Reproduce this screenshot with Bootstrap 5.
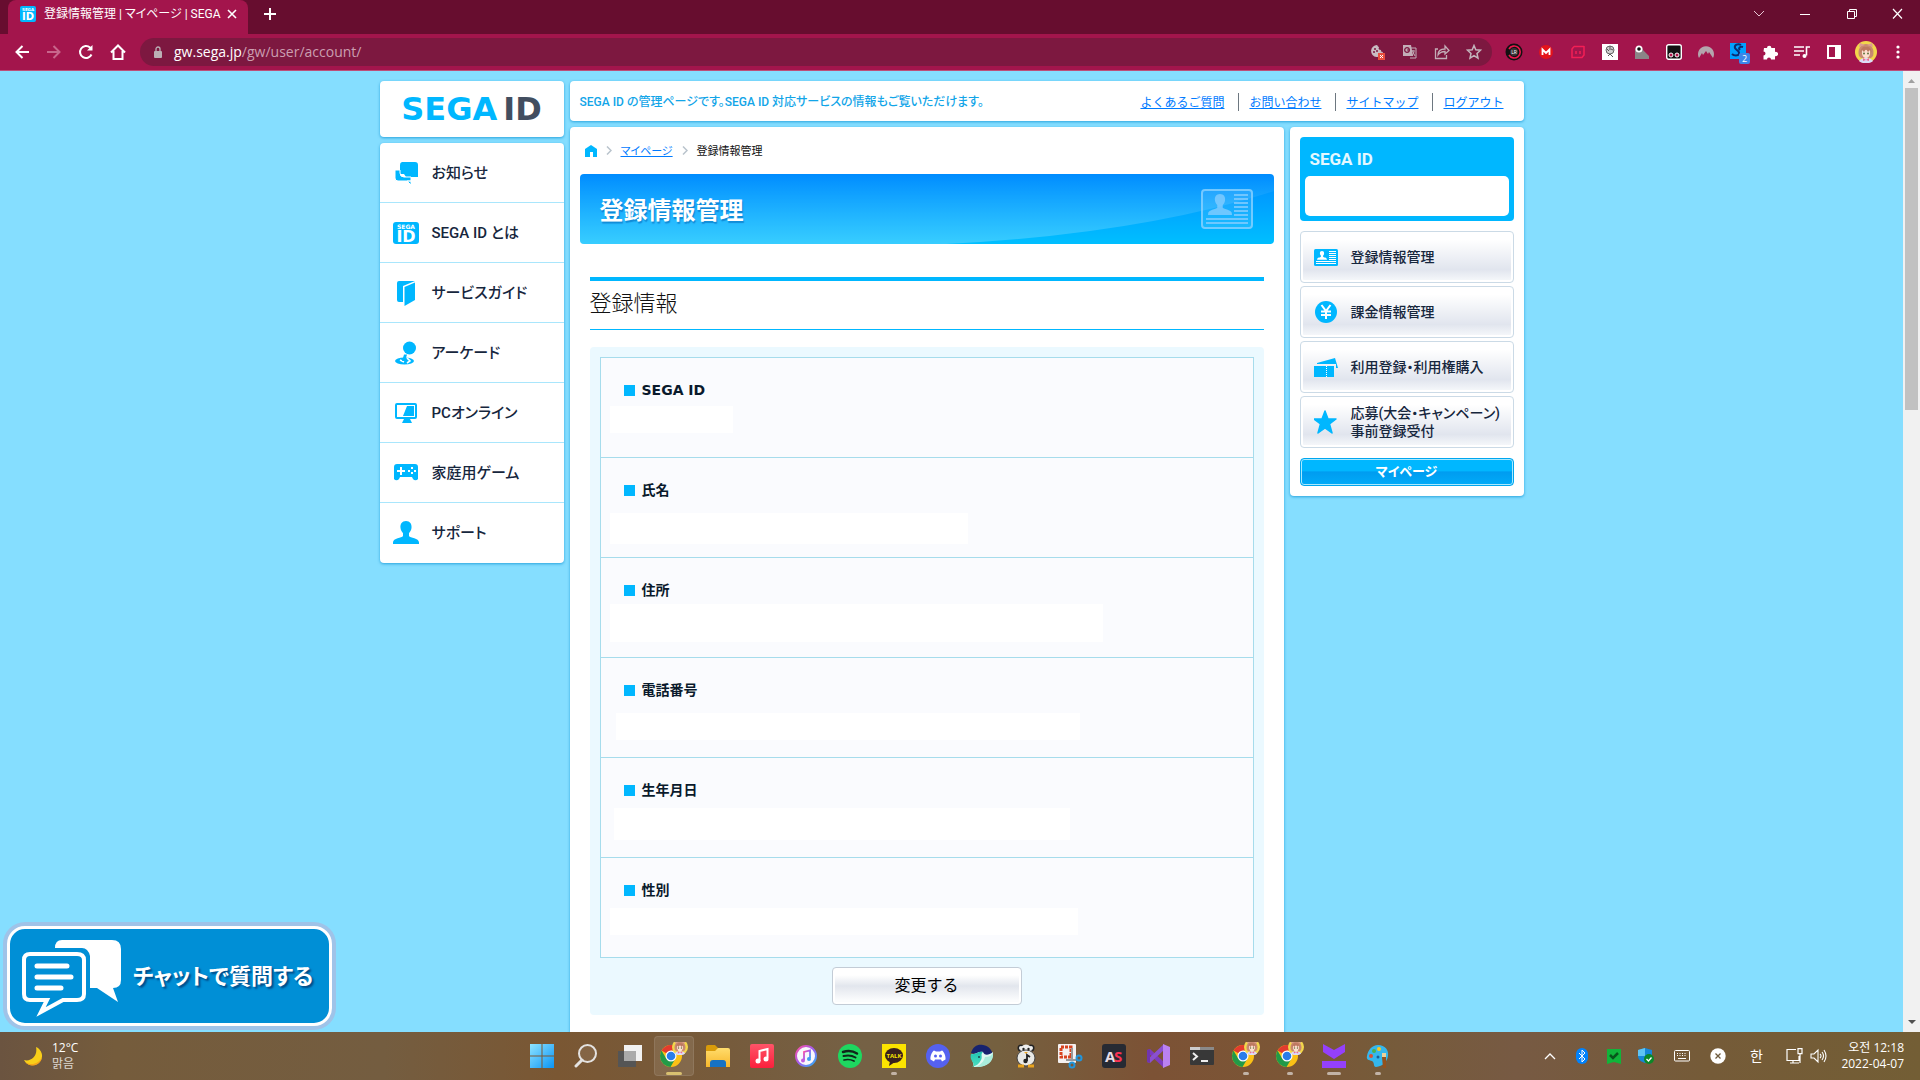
<!DOCTYPE html>
<html lang="ja">
<head>
<meta charset="utf-8">
<meta name="viewport" content="width=device-width, initial-scale=1">
<title>登録情報管理 | マイページ | SEGA ID</title>
<link href="https://cdn.jsdelivr.net/npm/bootstrap@5.3.0/dist/css/bootstrap.min.css" rel="stylesheet">
<style>
:root{--sky:#00b7ff;--ink:#16263d}
body{height:100vh;overflow:hidden;font-family:Roboto,"Noto Sans CJK JP",sans-serif;color:#111;background:#85deff;line-height:1.2}
svg{display:block;flex:none}
button{border:0;background:none;padding:0;color:inherit}
.palt{font-feature-settings:"palt"}
/* browser frame */
.ui{font-family:"Open Sans","Noto Sans CJK JP","Noto Sans CJK KR",sans-serif}
.tabstrip{height:34px;background:#670d2f;color:#fff;padding-left:8px}
.tab{width:240px;background:#a3154c;border-radius:8px 8px 0 0;font-size:12px;padding:0 11px 6px 12px;gap:8px}
.tab-title{font-family:Roboto,"Noto Sans CJK JP",sans-serif;flex:1 1 0;min-width:0}
.newtab{width:44px;padding-bottom:6px}
.winbtn{width:46px;height:24px}
.toolbar{height:37px;background:#a3154c;border-bottom:1px solid #bd4f79;color:#fff;padding:0 6px}
.tool{width:32px;height:28px;display:flex;align-items:center;justify-content:center;flex:none}
.address{height:28px;border-radius:14px;background:#7d1840;margin:0 6px;padding:0 2px}
.url{font-size:14px;text-decoration:none;color:#cb9fb0}
.url b{color:#fff;font-weight:400}
.scroller{width:17px;background:#f1f1f1;padding:7px 2px}
.thumb{height:34%;width:13px;background:#c1c1c1;margin-top:5px}
/* page */
.site{max-width:1144px;margin:0 auto;padding-top:10px;gap:6px}
.stack,.site-cols{gap:6px}
.panel{background:#fff;border-radius:4px;box-shadow:0 1px 3px #0089cfb0}
.side{width:184px;gap:6px}
.aside-col{width:234px}
.logo{height:56px;font:700 32px/56px "DejaVu Sans",sans-serif;color:var(--sky);text-decoration:none;gap:6px}
.logo span+span{color:#424e60}
.menu a{height:60px;padding:0 13px;gap:13px;color:var(--ink);font-size:15px;font-weight:500;text-decoration:none;border-bottom:1px solid #a9e6fc}
.menu a:last-child{border-bottom:0}
.menu svg,.acct svg{fill:var(--sky)}
.topbar{height:40px;padding:2px 20px 0 10px;font-size:12px}
.topbar p{color:#12a5e8;font-weight:500}
.topbar a,.crumbs a{color:#007bff}
.topbar li{font-family:"Noto Sans CJK JP",sans-serif;line-height:18px}
.topbar li+li{border-left:1px solid #6d7780;margin-left:14px;padding-left:10px}
.crumbs{font-size:11px;height:47px;padding:0 4px 0 5px;gap:9px;font-family:"Noto Sans CJK JP",sans-serif}
.main-col{padding:0 10px 60px}
.banner{height:70px;border-radius:4px;overflow:hidden;position:relative;background:linear-gradient(#008cff,#00bfff);padding:0 21px 0 20px}
.banner h1{font-size:24px;font-weight:700;color:#fff;text-shadow:1px 2px 1px #0067b890;position:relative;padding-top:4px}
.swoosh{position:absolute;inset:0;width:100%;height:100%}
.banner .idcard{position:relative}
.section-title{font:300 22px/40px "Noto Sans CJK JP",sans-serif;height:53px;border-top:4px solid var(--sky);border-bottom:1px solid var(--sky);margin:33px 10px 17px}
.sheet{background:#ebf9ff;border-radius:4px;margin:0 10px;padding:10px}
.fields{border:1px solid #a6dcec;background:#fafbfe}
.fields>div{height:100px;padding:0 9px}
.fields>div+div{border-top:1px solid #a6dcec}
.fields>div:first-child{height:99px}
.fields dt{font:700 14px/20px "DejaVu Sans","Noto Sans CJK JP",sans-serif;padding:22px 0 0 14px;gap:7px;color:#0a1a2c}
.fields dt::before{content:"";width:11px;height:11px;background:var(--sky)}
.fields dd{background:#fff;height:27px;margin:8px 0 0}
.w-id{width:123px}.w-name{width:358px}.w-addr{width:493px}.w-tel{width:464px}.w-birth{width:456px}.w-sex{width:468px}
.fields .w-id{margin-top:6px}
.fields .w-name,.fields .w-tel{margin-top:13px}
.fields .w-name{height:31px}
.fields .w-addr{margin-top:4px;height:38px}
.fields .w-tel{margin-left:6px}
.fields .w-birth{height:32px;margin-left:4px}
.change{width:190px;height:38px;border:1px solid #c3ccd6;border-radius:4px;background:linear-gradient(#fff 20%,#e2e6ed 50%,#fbfcfd 90%);box-shadow:inset 0 0 0 2px #fff;font:400 16px/20px "Noto Sans CJK JP",sans-serif;color:#000;margin:9px auto 0;padding-bottom:4px}
.acct{padding:10px}
.whoami{background:var(--sky);border-radius:4px;padding:12px 5px 5px;font-size:17px;line-height:20px;font-weight:700;margin-bottom:10px}
.whoami label{padding-left:5px;color:#e5f8ff}
.whoami input{display:block;width:100%;height:40px;border:0;border-radius:5px;background:#fff;margin-top:7px}
.acct-link{height:52px;border:1px solid #cbdae6;border-radius:4px;margin-bottom:3px;padding:0 2px 0 13px;gap:13px;background:linear-gradient(#fff 15%,#e1e5ee 75%,#f8fafc 100%);box-shadow:inset 0 0 0 2px #fff;color:var(--ink);text-decoration:none;font-size:14px;line-height:18px;font-weight:500;white-space:nowrap}
.mypage{height:28px;margin-top:10px;border:1px solid #00a6ee;border-radius:4px;box-shadow:inset 0 0 0 1px #a9e9ff;background:linear-gradient(#00b7ff 45%,#009cf0 50%,#00abf8);color:#fff;font-size:13px;font-weight:700;text-decoration:none}
.chat{position:absolute;left:7px;bottom:6px;width:325px;height:100px;background:#008fd6;border:3px solid #fff;border-radius:18px;box-shadow:0 0 0 4px #9fc3e8;color:#fff;font-size:22px;font-weight:700;padding:3px 11px 0;gap:10px;text-shadow:2px 2px 2px #004a86;white-space:nowrap}
/* taskbar */
.taskbar{height:48px;color:#fff;font-size:12px;line-height:16px;background:linear-gradient(90deg,#6b5440,#755c3c 6%,#745d40 20%,#7a5733 29%,#765b3c 38%,#756145 45%,#75603f 52%,#7c5235 60%,#7b5636 67%,#765b3a 72%,#775a43 79%,#755b38 89%,#735e35)}
.edge{flex:1 1 0;min-width:0}
.app{width:44px;height:48px;position:relative;display:flex;align-items:center;justify-content:center}
.app.active::before{content:"";position:absolute;inset:4px 2px;background:#ffffff18;border:1px solid #ffffff18;border-radius:4px}
.app.open::after,.app.active::after{content:"";position:absolute;bottom:5px;width:6px;height:3px;border-radius:2px;background:#c2b3a6}
.app.active::after{width:16px;background:#d8c070}
.app.wide::after{width:14px}
.app svg{position:relative}
.tray{width:32px;display:flex;justify-content:center;flex:none}
.han{font-size:14px;margin:0 6px}
.clock{padding:0 16px 0 14px}
</style>
<script src="https://cdn.jsdelivr.net/npm/bootstrap@5.3.0/dist/js/bootstrap.bundle.min.js"></script>
</head>
<body class="d-flex flex-column">
<svg width="0" height="0" class="position-absolute" aria-hidden="true">
<defs>
<linearGradient id="gwin" x2="1" y2="1"><stop stop-color="#8fe4ff"/><stop offset="1" stop-color="#0a94f5"/></linearGradient>
<linearGradient id="gsw" x2="0" y2="1"><stop stop-color="#fff" stop-opacity="0"/><stop offset="1" stop-color="#fff" stop-opacity=".22"/></linearGradient>
<linearGradient id="gred" x2="0" y2="1"><stop stop-color="#ff5468"/><stop offset="1" stop-color="#fb203c"/></linearGradient>
<linearGradient id="gfold" x2="0" y2="1"><stop stop-color="#ffdc6c"/><stop offset="1" stop-color="#f7b72b"/></linearGradient>
<linearGradient id="gnote" x2="1" y2="1"><stop stop-color="#ff4fa0"/><stop offset=".5" stop-color="#a05cf0"/><stop offset="1" stop-color="#25b6f5"/></linearGradient>
<linearGradient id="gwhale" x2="0" y2="1"><stop stop-color="#1fc3b2"/><stop offset="1" stop-color="#4fe0c0"/></linearGradient>
<symbol id="face" viewBox="0 0 22 22"><circle cx="11" cy="11" r="11" fill="#f2d64b"/><path d="M4 15C2 8 6 3 11 3s9 5 7 12l-2 2H6z" fill="#c98a70"/><path d="M4 6l1-4 5 2zM18 6l-1-4-5 2z" fill="#dd9c90"/><path d="M7 9h8v4q-1 4-4 4t-4-4z" fill="#fde0cf"/><path d="M5 12c1-6 4-7 6-6 3-1 5 1 6 6l-2-3-2 2-2-3-2 3-2-2z" fill="#bd7860"/><circle cx="9" cy="12.500" r="1" fill="#63733e"/><circle cx="13" cy="12.500" r="1" fill="#63733e"/><path d="M4 20c2-4 12-4 14 0-3 3-11 3-14 0z" fill="#dcdcf8"/><path d="M8 17l3 2 3-2v3l-3-1-3 1z" fill="#ef6c95"/></symbol>
<symbol id="chrome" viewBox="0 0 28 28"><circle cx="11" cy="17" r="11" fill="#fbc116"/><path d="M11 17L1.500 11.500A11 11 0 0 1 20.500 11.500H11z" fill="#e33b2e"/><path d="M1.500 11.500A11 11 0 0 0 10.500 28l5-8.500L6.200 19.500z" fill="#229a48"/><circle cx="11" cy="17" r="5.500" fill="#fff"/><circle cx="11" cy="17" r="4.300" fill="#2a7de9"/><use href="#face" x="12" y="0" width="16" height="16"/></symbol>
<symbol id="idbadge" viewBox="0 0 26 22"><rect width="26" height="22" rx="3" fill="#00b7ff"/><text x="13" y="6.500" text-anchor="middle" font-family="DejaVu Sans" font-weight="700" font-size="6" fill="#fff">SEGA</text><text x="13" y="19.500" text-anchor="middle" font-family="DejaVu Sans" font-weight="700" font-size="16" fill="#fff">ID</text></symbol>
<symbol id="person" viewBox="0 0 26 24"><path d="M13 0c4 0 6 3 5.500 7-.3 2.500-1.500 4-2.500 5v3c1 2 10 2 10 6.500V23H0v-1.500C0 17 9 17 10 15v-3c-1-1-2.200-2.500-2.500-5C7 3 9 0 13 0z"/></symbol>
</defs>
</svg>

<header class="ui flex-shrink-0">
<div class="tabstrip d-flex">
 <div class="tab d-flex align-items-center">
  <svg width="16" height="16" viewBox="0 0 16 16"><rect width="16" height="16" rx="2" fill="#00b7ff"/><text x="8" y="5" font-size="4" font-weight="700" text-anchor="middle" fill="#fff" font-family="DejaVu Sans">SEGA</text><text x="8" y="14" font-size="10" font-weight="700" text-anchor="middle" fill="#fff" font-family="DejaVu Sans">ID</text></svg>
  <span class="tab-title palt text-nowrap">登録情報管理 | マイページ | SEGA</span>
  <button aria-label="Close tab"><svg width="10" height="10" stroke="#fff" stroke-width="1.600"><path d="M1 1l8 8M9 1L1 9"/></svg></button>
 </div>
 <button class="newtab d-flex align-items-center justify-content-center" aria-label="New tab"><svg width="12" height="12" stroke="#fff" stroke-width="2"><path d="M6 0v12M0 6h12"/></svg></button>
 <div class="d-flex ms-auto">
  <button class="winbtn d-flex align-items-end justify-content-center pb-1" aria-label="Search tabs"><svg width="12" height="12" fill="none" stroke="#e7c6d3"><path d="M1 3l5 5 5-5"/></svg></button>
  <button class="winbtn d-flex align-items-end justify-content-center pb-1" aria-label="Minimize"><svg width="10" height="12" fill="none" stroke="#fff"><path d="M0 6.500h10"/></svg></button>
  <button class="winbtn d-flex align-items-end justify-content-center pb-1" aria-label="Restore"><svg width="11" height="12" fill="none" stroke="#fff"><path d="M1.500 3.500h7v7h-7zM3.500 3V1.500h7v7H9"/></svg></button>
  <button class="winbtn d-flex align-items-end justify-content-center pb-1" aria-label="Close"><svg width="11" height="12" fill="none" stroke="#fff" stroke-width="1.200"><path d="M1 1l9 9.500M10 1L1 10.500"/></svg></button>
 </div>
</div>
<div class="toolbar d-flex align-items-center">
 <button class="tool" aria-label="Back"><svg width="14" height="14" fill="none" stroke="#fff" stroke-width="2"><path d="M14 7H2M7.500 1L1.500 7l6 6"/></svg></button>
 <button class="tool" aria-label="Forward"><svg width="14" height="14" fill="none" stroke="#c8668c" stroke-width="2"><path d="M0 7h12M6.500 1l6 6-6 6"/></svg></button>
 <button class="tool" aria-label="Reload"><svg width="16" height="16" fill="none" stroke="#fff" stroke-width="2"><path d="M13.500 10.500A6 6 0 1 1 12 3.500l1.500 1.500"/><path d="M14.500 1v5.500H9z" fill="#fff" stroke="none"/></svg></button>
 <button class="tool" aria-label="Home"><svg width="16" height="16" fill="none" stroke="#fff" stroke-width="2"><path d="M1 8.500L8 1.500l7 7M3.500 7v8h9V7"/></svg></button>
 <div class="address d-flex align-items-center flex-fill">
  <span class="tool"><svg width="8" height="12" fill="#bbb0b5"><path d="M1 5h6a1 1 0 0 1 1 1v5a1 1 0 0 1-1 1H1a1 1 0 0 1-1-1V6a1 1 0 0 1 1-1z"/><path d="M2 5.500V3a2 2 0 0 1 4 0v2.500" fill="none" stroke="#bbb0b5" stroke-width="1.300"/></svg></span>
  <a class="url" href="#"><b>gw.sega.jp</b>/gw/user/account/</a>
  <span class="ms-auto"></span>
  <button class="tool" aria-label="Cookies"><svg width="16" height="16"><path d="M7 1a6 6 0 1 0 6 7c-2 0-2-1-2-2-2 0-3-1-2-3-1 0-1-1-2-2z" fill="#c9bcc2"/><circle cx="5" cy="5" r="1" fill="#7d1840"/><circle cx="4" cy="8" r="1" fill="#7d1840"/><circle cx="7" cy="7" r="1" fill="#7d1840"/><rect x="8" y="9" width="7" height="7" fill="#e84d3d"/><path d="M10 11l3 3m0-3l-3 3" stroke="#fff"/></svg></button>
  <button class="tool" aria-label="Translate"><svg width="16" height="16"><path d="M7 4h7v10H8" fill="none" stroke="#c3adb7"/><path d="M1 1h8l2 11H1z" fill="#c3adb7"/><circle cx="5" cy="6" r="2.300" fill="none" stroke="#7d1840" stroke-width="1.300"/><path d="M5 6h3" stroke="#7d1840"/><path d="M9 7h4M11 6v2l2 4M12 8l-2 4" stroke="#c3adb7"/></svg></button>
  <button class="tool" aria-label="Share"><svg width="16" height="16" fill="none" stroke="#c3adb7" stroke-width="1.300"><path d="M4 5H1.500v9.500h11V11M4 11c0-4 3-6 7-6V2l4 4.500L11 10V7.500C8 7.500 6 8 4 11z"/></svg></button>
  <button class="tool" aria-label="Bookmark"><svg width="16" height="16" fill="none" stroke="#c3b4bb" stroke-width="1.500"><path d="M8 1.500l1.800 4.300 4.700.4-3.500 3.200 1 4.800L8 11.700l-4 2.500 1-4.800L1.500 6.200l4.700-.4z"/></svg></button>
 </div>
 <button class="tool" aria-label="LR"><svg width="18" height="18"><circle cx="9" cy="9" r="8.500" fill="#111"/><path d="M4 6a6 6 0 1 1 0 6" fill="none" stroke="#ef174e" stroke-width="1.600"/><circle cx="9" cy="9" r="4" fill="#3b3438"/><text x="9" y="11" text-anchor="middle" font-size="5" fill="#fff">LR</text></svg></button>
 <button class="tool" aria-label="Mega"><svg width="14" height="14"><circle cx="7" cy="7" r="7" fill="#e4141b"/><path d="M3.500 10V4.500L7 8l3.500-3.500V10" stroke="#fff" stroke-width="1.800" fill="none"/></svg></button>
 <button class="tool" aria-label="Capture"><svg width="14" height="14" fill="none" stroke="#f31f55" stroke-width="1.500"><path d="M3 1.500h10M13 1v9l-2 2.500H1V4l2-2.500M5 6v3M9 6v3"/></svg></button>
 <button class="tool" aria-label="Sketch"><svg width="16" height="16"><path fill="#fff" d="M0 0h16v16H0z"/><circle cx="8" cy="6" r="4" fill="#cfcfcf" stroke="#666"/><path d="M5 5l2 2m2-2l2 1M6 12l2-2 3 3M8 2v4" stroke="#555" fill="none"/></svg></button>
 <button class="tool" aria-label="Stone"><svg width="16" height="16"><path d="M1 15V6C2 2 7 1 9 6l6 6v3z" fill="#8b8587"/><circle cx="5" cy="5" r="3.500" fill="#fff"/><circle cx="5" cy="5" r="1.800" fill="#111"/></svg></button>
 <button class="tool" aria-label="Scripts"><svg width="16" height="16"><rect x=".7" y=".7" width="14.600" height="14.600" rx="2" fill="#111" stroke="#fff" stroke-width="1.400"/><circle cx="5" cy="11" r="2" fill="#b4144a" stroke="#fff"/><circle cx="11" cy="11" r="2" fill="#b4144a" stroke="#fff"/></svg></button>
 <button class="tool" aria-label="Mountain"><svg width="16" height="14"><path d="M1 13A8 8 0 1 1 15 13l-4-6-1 2-2-3-3 4-1-2z" fill="#b4a5ad"/></svg></button>
 <button class="tool" aria-label="Shazam"><svg width="24" height="24"><path fill="#00a0ff" d="M4 3h16v16H4z"/><path d="M15 5c-3-2-7 0-6 3 1 2 5 3 4 6-1 2-5 2-7 0M17 7c-3-1-5 1-3 3" stroke="#0b2b70" stroke-width="2" fill="none"/><rect x="13" y="13" width="11" height="11" rx="2" fill="#3b86ea"/><text x="18.500" y="22" font-size="9" fill="#fff" text-anchor="middle">2</text></svg></button>
 <button class="tool" aria-label="Extensions"><svg width="16" height="16" fill="#fff"><path d="M2 4h3a2.200 2.200 0 1 1 4.400 0H13v4a2.200 2.200 0 1 1 0 4v3.500H9a2 2 0 0 0-4 0H1.500v-4a2 2 0 0 0 0-4z"/></svg></button>
 <button class="tool" aria-label="Media"><svg width="16" height="14" fill="none" stroke="#fff" stroke-width="1.600"><path d="M0 2h10M0 6h10M0 10h6M12.500 10.500V2H16"/><circle cx="10.500" cy="11" r="2" fill="#fff" stroke="none"/></svg></button>
 <button class="tool" aria-label="Side panel"><svg width="14" height="14"><path fill="#fff" fill-rule="evenodd" d="M0 0h14v14H0zM2 2v10h6V2z"/></svg></button>
 <button class="tool" aria-label="Profile"><svg width="22" height="22"><use href="#face"/></svg></button>
 <button class="tool" aria-label="Menu"><svg width="4" height="14" fill="#fff"><circle cx="2" cy="2" r="1.600"/><circle cx="2" cy="7" r="1.600"/><circle cx="2" cy="12" r="1.600"/></svg></button>
</div>
</header>

<div class="d-flex flex-fill overflow-hidden position-relative">
<div class="flex-fill">
<div class="site d-flex align-items-start">
 <div class="side d-flex flex-column flex-shrink-0">
  <a href="#" class="panel logo d-flex justify-content-center"><span>SEGA</span><span>ID</span></a>
  <nav class="panel menu palt">
   <a href="#" class="d-flex align-items-center"><svg width="26" height="24"><path d="M9 1h13a3 3 0 0 1 3 3v12H13l-2-3H7V4a3 3 0 0 1 2-3z"/><path d="M2 9v8a3 3 0 0 0 3 3h13v4l-4-4h4v-4h-7a4 4 0 0 1-4-4V9z" stroke="#fff" stroke-width="1"/></svg>お知らせ</a>
   <a href="#" class="d-flex align-items-center"><svg width="26" height="22"><use href="#idbadge"/></svg>SEGA ID とは</a>
   <a href="#" class="d-flex align-items-center"><svg width="26" height="26"><path d="M6 1h16L10 6v16H6a2 2 0 0 1-2-2V3a2 2 0 0 1 2-2z"/><path d="M11.500 7L22 2.500V20l-10.500 6z"/></svg>サービスガイド</a>
   <a href="#" class="d-flex align-items-center"><svg width="26" height="24"><circle cx="16.500" cy="7" r="6.500"/><ellipse cx="11.500" cy="20" rx="9.500" ry="3.500"/><path d="M7 19l4 2M14 17l3 3-3 2" stroke="#fff" stroke-width="1.600" fill="none"/><path d="M11 13.500h3L12 20H9z"/></svg>アーケード</a>
   <a href="#" class="d-flex align-items-center"><svg width="26" height="22"><path fill-rule="evenodd" d="M4 1h18a2 2 0 0 1 2 2v12a2 2 0 0 1-2 2h-5l2 4H9l2-4H4a2 2 0 0 1-2-2V3a2 2 0 0 1 2-2zM4 3v12h18V3z"/><path d="M14 4h7v10H10z"/></svg>PCオンライン</a>
   <a href="#" class="d-flex align-items-center"><svg width="26" height="20"><path d="M4 1h18a3 3 0 0 1 3 3v12a3 3 0 0 1-5 0l-1-2H7l-1 2a3 3 0 0 1-5 0V4a3 3 0 0 1 3-3z"/><path d="M8 4v8M4 8h8" stroke="#fff" stroke-width="2"/><path d="M18 4h2v2h-2zM18 9h2v2h-2zM15 7h2v2h-2zM21 7h2v2h-2z" fill="#fff"/></svg>家庭用ゲーム</a>
   <a href="#" class="d-flex align-items-center"><svg width="26" height="24"><use href="#person"/></svg>サポート</a>
  </nav>
 </div>
 <div class="stack flex-fill d-flex flex-column">
  <div class="panel topbar d-flex align-items-center justify-content-between">
   <p class="palt m-0">SEGA ID の管理ページです。SEGA ID 対応サービスの情報もご覧いただけます。</p>
   <ul class="list-unstyled d-flex m-0"><li><a href="#">よくあるご質問</a></li><li><a href="#">お問い合わせ</a></li><li><a href="#">サイトマップ</a></li><li><a href="#">ログアウト</a></li></ul>
  </div>
  <div class="d-flex align-items-start site-cols">
   <main class="panel main-col flex-fill">
    <nav class="crumbs palt d-flex align-items-center">
     <a href="#" aria-label="ホーム"><svg width="12" height="12" fill="#00b7ff"><path d="M6 0l6 4v8H8V7H5v5H0V4z"/></svg></a>
     <svg width="6" height="9" fill="none" stroke="#b9c3cc" stroke-width="1.500"><path d="M1 .5l4 4-4 4"/></svg>
     <a href="#">マイページ</a>
     <svg width="6" height="9" fill="none" stroke="#b9c3cc" stroke-width="1.500"><path d="M1 .5l4 4-4 4"/></svg>
     <span>登録情報管理</span>
    </nav>
    <div class="banner d-flex align-items-center justify-content-between">
     <svg class="swoosh" viewBox="0 0 694 70" preserveAspectRatio="none"><path d="M0 0h694v17Q560 60 366 70H0z" fill="url(#gsw)"/></svg>
     <h1 class="m-0">登録情報管理</h1>
     <svg class="idcard" width="52" height="40" fill="#8acfff" opacity=".8"><rect x="1" y="1" width="50" height="38" rx="3" fill="#fff" fill-opacity=".12" stroke="#8fd3ff" stroke-width="2"/><use href="#person" x="7" y="5" width="24" height="22"/><path d="M33 5h14v2H33zM33 9h14v2H33zM33 13h14v2H33zM33 17h14v2H33zM33 21h14v2H33zM33 25h14v2H33zM5 29h42v2H5zM5 33h42v2H5z"/></svg>
    </div>
    <h2 class="section-title">登録情報</h2>
    <section class="sheet">
     <dl class="fields m-0">
      <div><dt class="d-flex align-items-center">SEGA ID</dt><dd class="w-id"></dd></div>
      <div><dt class="d-flex align-items-center">氏名</dt><dd class="w-name"></dd></div>
      <div><dt class="d-flex align-items-center">住所</dt><dd class="w-addr"></dd></div>
      <div><dt class="d-flex align-items-center">電話番号</dt><dd class="w-tel"></dd></div>
      <div><dt class="d-flex align-items-center">生年月日</dt><dd class="w-birth"></dd></div>
      <div><dt class="d-flex align-items-center">性別</dt><dd class="w-sex"></dd></div>
     </dl>
     <button class="change d-block">変更する</button>
    </section>
   </main>
   <aside class="panel acct aside-col flex-shrink-0 palt">
    <div class="whoami"><label for="who">SEGA ID</label><input id="who" type="text"></div>
    <a href="#" class="acct-link d-flex align-items-center"><svg width="24" height="17"><rect width="24" height="17" rx="1.500"/><g fill="#fff"><use href="#person" x="3" y="2" width="10" height="9"/><path d="M15 2h7v1h-7zM15 4h7v1h-7zM15 6h7v1h-7zM15 8h7v1h-7zM15 10h7v1h-7zM2 12h20v1H2zM2 14h20v1H2z"/></g></svg>登録情報管理</a>
    <a href="#" class="acct-link d-flex align-items-center"><svg width="24" height="22"><circle cx="12" cy="11" r="11"/><path d="M7.500 4l4.500 6 4.500-6M12 10v8M7 10.500h10M7 14h10" stroke="#fff" stroke-width="2" fill="none"/></svg>課金情報管理</a>
    <a href="#" class="acct-link d-flex align-items-center"><svg width="24" height="20"><path d="M0 9h20v11H0z"/><path d="M3 6l18-5 3 10h-2V7H3z"/><path d="M12.500 9v11" stroke="#fff" stroke-dasharray="1 1"/></svg>利用登録・利用権購入</a>
    <a href="#" class="acct-link d-flex align-items-center"><svg width="24" height="24"><path stroke="#00b7ff" stroke-width="1.500" stroke-linejoin="round" d="M11 1l3 8h8l-6.500 5L18 23l-7-5-7 5 2.500-9L0 9h8z"/></svg><span>応募(大会・キャンペーン)<br>事前登録受付</span></a>
    <a href="#" class="mypage d-flex align-items-center justify-content-center">マイページ</a>
   </aside>
  </div>
 </div>
</div>
</div>
<div class="scroller d-flex flex-column align-items-center flex-shrink-0" aria-hidden="true">
 <svg width="7" height="5" fill="#a0a0a0"><path d="M0 5l3.500-4L7 5z"/></svg>
 <div class="thumb"></div>
 <svg class="mt-auto" width="8" height="5" fill="#505050"><path d="M0 0h8L4 4z"/></svg>
</div>
<button class="chat palt d-flex align-items-center"><svg width="102" height="78"><path d="M41 1h50q9 0 9 9v31q0 8-8 8l5 14-21-14h-7V17q-2-8-8-8H34q0-8 7-8z" fill="#fff"/><path d="M9 15h47q7 0 7 6v34q0 6-7 6H42L20 73l6-12H9q-6 0-6-6V21q0-6 6-6z" fill="#008fd6" stroke="#fff" stroke-width="4"/><path d="M16 27h30M16 38h34M16 49h24" stroke="#fff" stroke-width="5" stroke-linecap="round"/></svg>チャットで質問する</button>
</div>

<footer class="taskbar ui d-flex flex-shrink-0">
 <div class="edge d-flex align-items-center">
  <svg class="ms-4 me-2" width="20" height="20"><path d="M12 1a9.500 9.500 0 1 1-12 13c7 2 14-4 12-13z" fill="#f9cf19"/><path d="M1 16c6 4 14 2 17-5-1 9-12 11-17 5z" fill="#f5a31a"/></svg>
  <div>12°C<br><span class="opacity-75">맑음</span></div>
 </div>
 <div class="d-flex flex-shrink-0">
  <button class="app" aria-label="Start"><svg width="24" height="24" fill="url(#gwin)"><path d="M0 0h11.500v11.500H0zM12.500 0H24v11.500H12.500zM0 12.500h11.500V24H0zM12.500 12.500H24V24H12.500z"/></svg></button>
  <button class="app" aria-label="Search"><svg width="24" height="24" fill="#ffffff15" stroke="#e4e2e0" stroke-width="2"><circle cx="13.500" cy="9.500" r="8.500"/><path d="M8 16l-6 6" stroke-width="3" stroke-linecap="round"/></svg></button>
  <button class="app" aria-label="Task view"><svg width="26" height="24"><path fill="#f1f1f1" d="M7 1h18v16H7z"/><path fill="#555" d="M1 7h18v16H1z"/><path fill="#aaa" d="M7 7h12v10H7z"/></svg></button>
  <button class="app active" aria-label="Chrome"><svg width="28" height="28"><use href="#chrome" y="-3"/></svg></button>
  <button class="app" aria-label="Explorer"><svg width="24" height="22"><path d="M0 2a2 2 0 0 1 2-2h7l3 3v5H0z" fill="#d99b0a"/><path d="M0 6h9l3-3h10a2 2 0 0 1 2 2v17H0z" fill="url(#gfold)"/><path d="M4 22v-4a3 3 0 0 1 3-3h10a3 3 0 0 1 3 3v4z" fill="#1672c4"/></svg></button>
  <button class="app" aria-label="Music"><svg width="24" height="24"><rect width="24" height="24" rx="2" fill="url(#gred)"/><path d="M9.500 17V7l8-2v9" fill="none" stroke="#fff" stroke-width="2"/><circle cx="8" cy="17" r="2.500" fill="#fff"/><circle cx="16" cy="15" r="2.500" fill="#fff"/></svg></button>
  <button class="app" aria-label="iTunes"><svg width="22" height="22"><circle cx="11" cy="11" r="10" fill="#f9f7fc" stroke="url(#gnote)" stroke-width="2"/><path d="M9 15V7l6-1.500V13" fill="none" stroke="url(#gnote)" stroke-width="1.800"/><circle cx="8" cy="15.500" r="2" fill="#c35ce0"/><circle cx="14" cy="14" r="2" fill="#3f9ef0"/></svg></button>
  <button class="app" aria-label="Spotify"><svg width="24" height="24" fill="none" stroke="#10251a" stroke-linecap="round"><circle cx="12" cy="12" r="12" fill="#1ed760" stroke="none"/><path d="M5 8c5-1.500 10-1 14 1.500" stroke-width="2.500"/><path d="M5.500 12c5-1.300 8.500-.7 12 1.500" stroke-width="2"/><path d="M6 16c4-1 7-.5 10 1" stroke-width="1.700"/></svg></button>
  <button class="app open" aria-label="KakaoTalk"><svg width="24" height="24"><path fill="#fbe300" d="M0 0h24v24H0z"/><ellipse cx="12" cy="11.500" rx="9" ry="7.500" fill="#38201e"/><path d="M8 17l-1 5 6-4z" fill="#38201e"/><text x="12" y="14" text-anchor="middle" font-size="6" font-weight="700" fill="#fbe300">TALK</text></svg></button>
  <button class="app" aria-label="Discord"><svg width="24" height="24"><circle cx="12" cy="12" r="12" fill="#5561f0"/><path d="M8 6.500l2 1h4l2-1c2 1 4 6 3.500 9L16 17.500l-1-2H9l-1 2-3.500-2C4 12.500 6 7.500 8 6.500z" fill="#fff"/><circle cx="9.500" cy="12" r="1.500" fill="#5561f0"/><circle cx="14.500" cy="12" r="1.500" fill="#5561f0"/></svg></button>
  <button class="app" aria-label="Whale"><svg width="24" height="24"><path d="M1 9C3 2 8 0 13 1c6 1 9 5 10 10l-9 1z" fill="#17236f"/><path d="M1 10c5 1 7-3 12-2 1 3 5 4 10 0 1 10-8 16-19 15z" fill="#dff8f1"/><path d="M1 10c5 1 7-3 12-2-3 2 0 5-2 8-2 4-5 6-9 7 3-2 1-4 0-6-1-2-2-4-1-7z" fill="url(#gwhale)"/><path d="M23 9c1 9-7 15-18 14 6-2 9-6 10-10 4 0 6-1 8-4z" fill="#a9eddb"/><circle cx="9" cy="13" r="1" fill="#17444d"/></svg></button>
  <button class="app" aria-label="Penguin"><svg width="22" height="24"><circle cx="6" cy="4" r="3.500" fill="#222"/><circle cx="16" cy="4" r="3.500" fill="#222"/><circle cx="6" cy="4" r="2" fill="#eee"/><circle cx="16" cy="4" r="2" fill="#eee"/><circle cx="11" cy="6" r="5.500" fill="#eee"/><ellipse cx="11" cy="14" rx="9" ry="8" fill="#e9e9e6" stroke="#444"/><circle cx="8.500" cy="5" r="1.200" fill="#222"/><circle cx="13.500" cy="5" r="1.200" fill="#222"/><path d="M9 8h4l-2 2z" fill="#eea829"/><path d="M12 17v-6l3 2" stroke="#222" stroke-width="1.800" fill="none"/><circle cx="10.500" cy="17" r="2.200" fill="#222"/><path d="M3 22h6M13 22h6" stroke="#e9a41e" stroke-width="3"/></svg></button>
  <button class="app" aria-label="Snipping"><svg width="26" height="26"><rect x="1" y="1" width="18" height="19" rx="1" fill="#f4f1f1"/><path d="M4 4h10v10H4z" fill="none" stroke="#d8431f" stroke-width="3" stroke-dasharray="3 1"/><path d="M15 5v13M9 17h10" stroke="#999" stroke-width="2"/><g fill="none" stroke="#2195dc" stroke-width="2"><circle cx="22" cy="15" r="2.500"/><circle cx="15" cy="22" r="2.500"/></g></svg></button>
  <button class="app" aria-label="AS"><svg width="24" height="24"><rect width="24" height="24" rx="3" fill="#262a33"/><text x="3" y="18" font-size="15" font-weight="700" fill="#e8dde6">A</text><text x="12" y="18" font-size="15" font-weight="700" fill="#fc3354">S</text></svg></button>
  <button class="app" aria-label="Visual Studio"><svg width="24" height="24"><path d="M1 6l3-1 14 13V24L1 8z" fill="#7d3bc0"/><path d="M1 18l3 1L18 6V0L1 16z" fill="#8a50cf"/><path d="M1 6v12l3 1V5z" fill="#7135ae"/><path d="M17 0l7 3v18l-7 3z" fill="#ba81f2"/></svg></button>
  <button class="app" aria-label="Terminal"><svg width="24" height="18"><rect width="24" height="18" rx="1" fill="#383838"/><path d="M0 0h24v3H0z" fill="#8a8a8a"/><path d="M0 0h10v3H0z" fill="#ccc"/><path d="M3 6l4 3.500L3 13M11 14h7" stroke="#eee" stroke-width="2" fill="none"/></svg></button>
  <button class="app open" aria-label="Chrome"><svg width="28" height="28"><use href="#chrome" y="-3"/></svg></button>
  <button class="app open" aria-label="Chrome"><svg width="28" height="28"><use href="#chrome" y="-3"/></svg></button>
  <button class="app open wide" aria-label="Download"><svg width="24" height="24" fill="#9440fb"><path d="M1 0l11 6 11-6v8l-11 7L1 8zM0 17h24v7H0z"/></svg></button>
  <button class="app open" aria-label="Paint"><svg width="24" height="24"><path d="M12 1c7 0 11 5 10 11s-5 10-12 11c-3 0-1-4-4-6-3-1-6-1-5-5C2 6 6 1 12 1z" fill="#35b7ec"/><circle cx="8" cy="7" r="2" fill="#4cb04f"/><circle cx="13" cy="5" r="2" fill="#f8c921"/><circle cx="5" cy="12" r="2" fill="#dc5030"/><circle cx="12" cy="13" r="1.500" fill="#1b5f95"/><path d="M16 9h4v5h-4z" fill="#ead09a"/><path d="M16 13h4v11h-3z" fill="#95521d"/></svg></button>
 </div>
 <div class="edge d-flex align-items-center justify-content-end">
  <button class="tray" aria-label="More"><svg width="12" height="8" fill="none" stroke="#fff" stroke-width="1.300"><path d="M1 7l5-5 5 5"/></svg></button>
  <span class="tray"><svg width="12" height="16"><rect width="12" height="16" rx="6" fill="#0082fc"/><path d="M3 5l6 6-3 3V2l3 3-6 6" stroke="#fff" fill="none"/></svg></span>
  <span class="tray"><svg width="14" height="16"><path d="M0 1h14v15l-7-2-7 2z" fill="#10b43a"/><path d="M3 7l3 3 5-5" stroke="#07551b" stroke-width="2.500" fill="none"/></svg></span>
  <span class="tray"><svg width="16" height="16"><path d="M7 0l7 2v6c0 4-4 6-7 7-3-1-7-3-7-7V2z" fill="#1587d8"/><path d="M7 0v8H0V2z" fill="#5fc4f3"/><circle cx="11" cy="11" r="5" fill="#0b8828"/><path d="M8.500 11l2 2 3-3.500" stroke="#fff" stroke-width="1.300" fill="none"/></svg></span>
  <button class="tray mx-1" aria-label="Keyboard"><svg width="16" height="12" fill="none" stroke="#fff"><rect x=".5" y=".5" width="15" height="10.500" rx="1"/><path d="M3 3.500h10M3 5.500h10" stroke-dasharray="1 1.500"/><path d="M4 8.500h8"/></svg></button>
  <span class="tray"><svg width="16" height="16"><circle cx="8" cy="8" r="7.700" fill="#fff"/><path d="M5.500 5.500l5 5m0-5l-5 5" stroke="#6d5a3d" stroke-width="1.300"/></svg></span>
  <button class="tray han">한</button>
  <button class="tray" aria-label="Network"><svg width="17" height="16" fill="none" stroke="#fff" stroke-width="1.200"><path d="M10 1.500H1v11h12V8M4 15h9M7 12.500V15M12 .7h4v5h-4zM14 6v9"/></svg></button>
  <button aria-label="Volume"><svg width="17" height="16" fill="none" stroke="#fff" stroke-width="1.100"><path d="M1 6h3l4-4v12l-4-4H1zM10 6q2 2 0 4M12 4q3 4 0 8M14 2q4 6 0 12"/></svg></button>
  <div class="clock text-end text-nowrap">오전 12:18<br>2022-04-07</div>
 </div>
</footer>
</body>
</html>
